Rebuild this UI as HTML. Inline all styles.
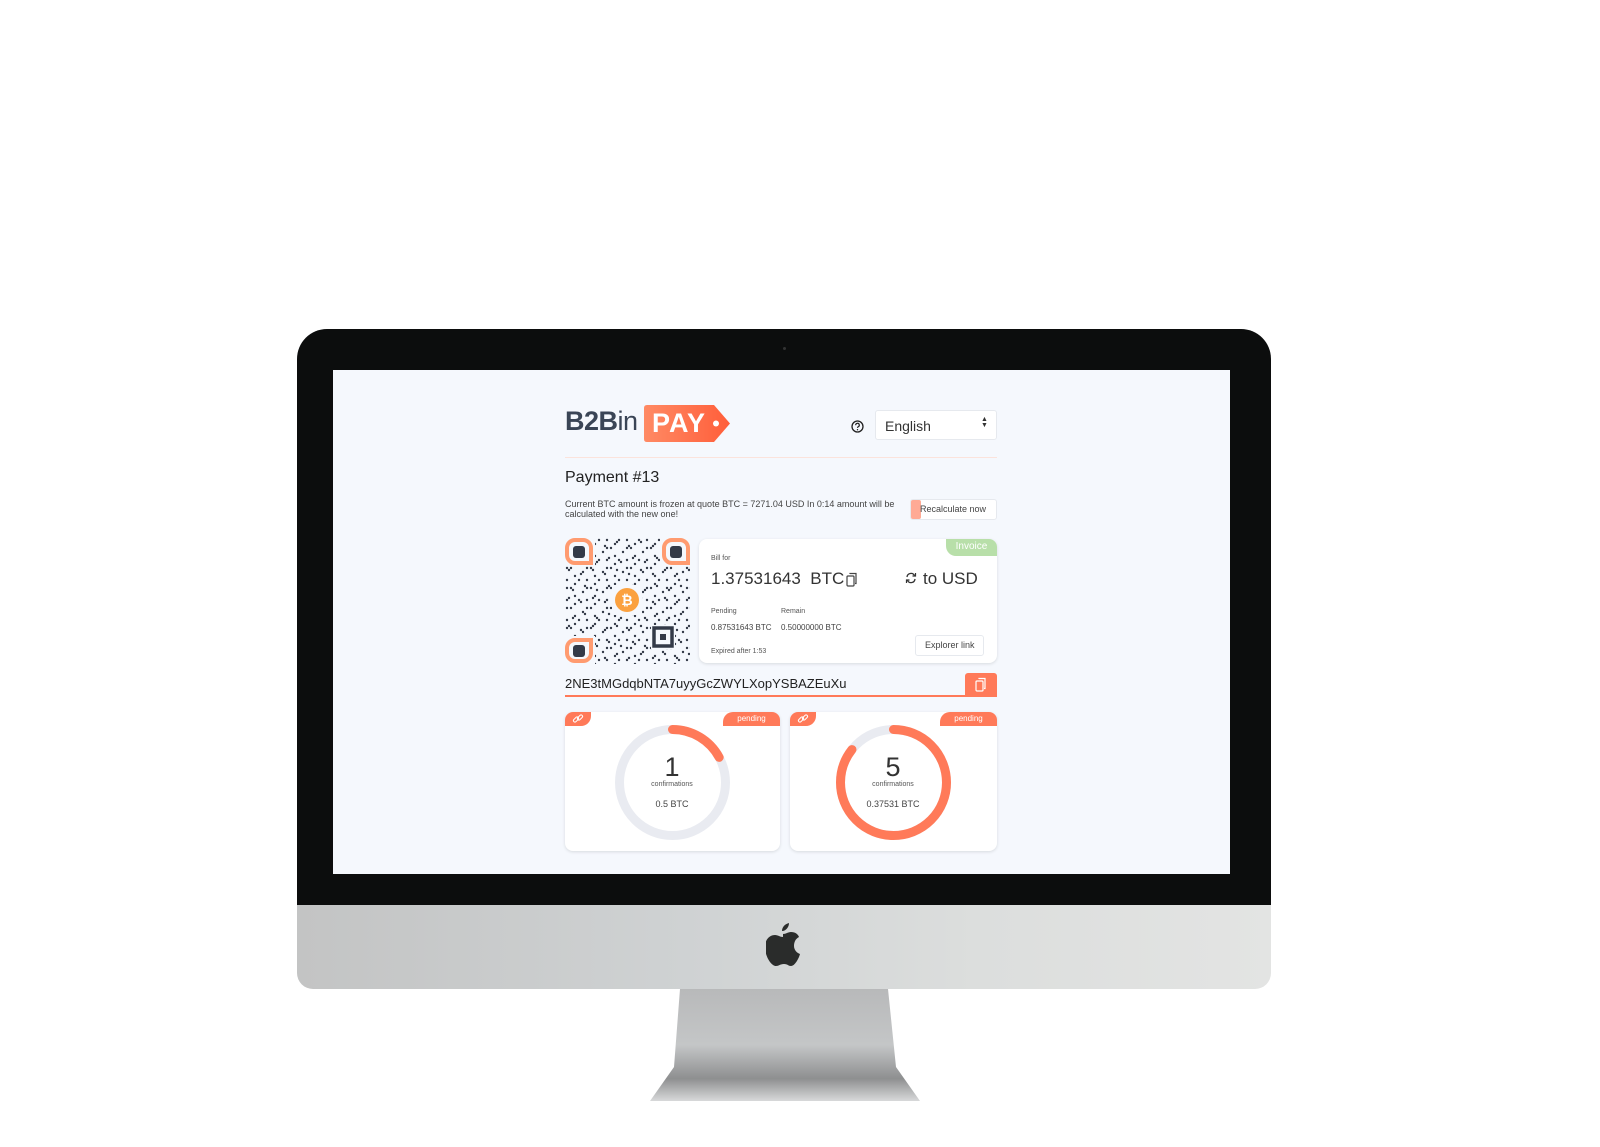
<!DOCTYPE html>
<html><head><meta charset="utf-8">
<style>
*{margin:0;padding:0;box-sizing:border-box}
body{width:1600px;height:1147px;background:#fff;position:relative;overflow:hidden;font-family:"Liberation Sans",sans-serif;color:#2b2f36}
.abs{position:absolute}
.bezel{left:297px;top:329px;width:974px;height:580px;background:#0c0d0d;border-radius:30px 30px 0 0}
.screen{left:333px;top:370px;width:897px;height:504px;background:#f5f8fd}
.chin{left:297px;top:905px;width:974px;height:84px;background:linear-gradient(90deg,#c3c4c4,#cfd2d3 40%,#dcdedd 70%,#e3e4e3);border-radius:0 0 16px 16px}
.stand{left:650px;top:989px;width:270px;height:112px}
.t{position:absolute;white-space:nowrap}
.card{position:absolute;background:#fff;border-radius:8px;box-shadow:0 1px 3px rgba(0,0,0,.12)}
.pend{position:absolute;background:#ff7a59;color:#fff;font-size:8px;text-align:center;line-height:13px}
</style></head><body>
<div class="abs bezel"></div>
<div class="abs" style="left:783px;top:347px;width:3px;height:3px;border-radius:50%;background:#333"></div>
<div class="abs screen"></div>
<div class="abs chin"></div>
<svg class="abs" style="left:766px;top:922px" width="36" height="46" viewBox="0 0 36 46"><path d="M23 1c0 4-3 8-7 8 0-4 3-7 7-8z M17 12c3 0 5-2 8-2 4 0 7 2 8 5-4 2-5 6-5 9 0 4 3 7 6 8-1 4-5 12-9 12-3 0-3-2-7-2s-5 2-8 2c-5 0-11-10-11-19 0-8 5-12 10-12 3 0 5 2 8 2z" fill="#2a2c2b"/></svg>
<svg class="abs stand" viewBox="0 0 270 112"><defs><linearGradient id="sg" x1="0" y1="0" x2="0" y2="1"><stop offset="0" stop-color="#b8b9ba"/><stop offset=".5" stop-color="#c4c6c7"/><stop offset=".8" stop-color="#8e8f90"/><stop offset="1" stop-color="#d8d9da"/></linearGradient></defs><path d="M30 0H238L246 78L270 112H0L24 78Z" fill="url(#sg)"/></svg>

<div class="t" style="left:565px;top:406px;font-size:27px;font-weight:bold;color:#3a4556;letter-spacing:-0.5px">B2B<span style="font-weight:normal">in</span></div>
<svg class="abs" style="left:644px;top:405px" width="86" height="37" viewBox="0 0 86 37"><defs><linearGradient id="lg" x1="0" x2="1"><stop offset="0" stop-color="#ff8a64"/><stop offset="1" stop-color="#ff5e3a"/></linearGradient></defs><path d="M3 0H70L86 18.5L70 37H3Q0 37 0 34V3Q0 0 3 0Z" fill="url(#lg)"/><circle cx="72" cy="18.5" r="3" fill="#fff"/></svg>
<div class="t" style="left:652px;top:408px;font-size:27px;font-weight:bold;color:#fff;letter-spacing:1px">PAY</div>
<svg class="abs" style="left:851px;top:420px" width="13" height="13" viewBox="0 0 13 13"><circle cx="6.5" cy="6.5" r="5.5" fill="none" stroke="#222" stroke-width="1.3"/><path d="M4.7 5.2a1.8 1.8 0 1 1 2.6 1.5c-.6.3-.8.6-.8 1.2" fill="none" stroke="#222" stroke-width="1.2"/><circle cx="6.5" cy="9.7" r=".7" fill="#222"/></svg>
<div class="abs" style="left:875px;top:410px;width:122px;height:30px;background:#fff;border:1px solid #e6e9ee;border-radius:3px"></div>
<div class="t" style="left:885px;top:418px;font-size:14px;color:#333">English</div>
<div class="t" style="left:981px;top:417px;font-size:7px;color:#333;line-height:6px">▲<br>▼</div>
<div class="abs" style="left:565px;top:457px;width:432px;height:1px;background:#fbe3dc"></div>
<div class="t" style="left:565px;top:469px;font-size:16px;color:#222">Payment #13</div>
<div class="t" style="left:565px;top:499px;font-size:9px;color:#444;line-height:10px">Current BTC amount is frozen at quote BTC = 7271.04 USD In 0:14 amount will be<br>calculated with the new one!</div>
<div class="abs" style="left:910px;top:499px;width:87px;height:21px;background:#fff;border:1px solid #e6e9ee;border-radius:3px"></div>
<div class="abs" style="left:911px;top:500px;width:10px;height:19px;background:#ffaa95;border-radius:2px"></div>
<div class="t" style="left:920px;top:504px;font-size:9px;color:#444">Recalculate now</div>

<svg class="abs" style="left:565px;top:538px" width="125" height="126" viewBox="0 0 125 126">
<defs>
<pattern id="p1" width="20" height="20" patternUnits="userSpaceOnUse"><g fill="#333a48"><circle cx="2" cy="2" r="1.2"/><circle cx="14" cy="2" r="1.2"/><circle cx="10" cy="6" r="1.2"/><circle cx="2" cy="10" r="1.2"/><circle cx="6" cy="10" r="1.2"/><circle cx="18" cy="14" r="1.2"/><circle cx="10" cy="18" r="1.2"/></g></pattern>
<pattern id="p2" width="24" height="28" patternUnits="userSpaceOnUse"><g fill="#333a48"><circle cx="4" cy="4" r="1.2"/><circle cx="16" cy="8" r="1.2"/><circle cx="20" cy="20" r="1.2"/><circle cx="8" cy="24" r="1.2"/></g></pattern>
</defs>
<rect x="30" y="0" width="95" height="126" fill="url(#p1)"/><rect x="0" y="28" width="30" height="70" fill="url(#p1)"/>
<rect x="30" y="0" width="95" height="126" fill="url(#p2)"/><rect x="0" y="28" width="30" height="70" fill="url(#p2)"/>
<rect x="0" y="0" width="30" height="28" fill="#f5f8fd"/><rect x="95" y="0" width="30" height="28" fill="#f5f8fd"/><rect x="0" y="98" width="30" height="28" fill="#f5f8fd"/>
<rect x="47" y="47" width="30" height="30" fill="#f5f8fd"/><rect x="86" y="87" width="24" height="24" fill="#f5f8fd"/>
<g fill="none" stroke="#ff9b70" stroke-width="4"><path d="M2 10a8 8 0 0 1 8-8h8a8 8 0 0 1 8 8v15H10a8 8 0 0 1-8-8z"/><path d="M99 10a8 8 0 0 1 8-8h8a8 8 0 0 1 8 8v15H107a8 8 0 0 1-8-8z"/><path d="M2 110a8 8 0 0 1 8-8h16v13a8 8 0 0 1-8 8h-8a8 8 0 0 1-8-8z"/></g>
<rect x="8" y="8" width="12" height="12" rx="3" fill="#333a48"/><rect x="105" y="8" width="12" height="12" rx="3" fill="#333a48"/><rect x="8" y="107" width="12" height="12" rx="3" fill="#333a48"/>
<rect x="89" y="90" width="18" height="18" fill="none" stroke="#333a48" stroke-width="3.5"/><rect x="95" y="96" width="6" height="6" fill="#333a48"/>
<circle cx="62" cy="62" r="12" fill="#fba13f"/><text x="62" y="67" text-anchor="middle" font-size="14" font-weight="bold" fill="#fff" font-family="Liberation Sans">₿</text>
</svg>

<div class="card" style="left:699px;top:539px;width:298px;height:124px;overflow:hidden"><div class="abs" style="right:0;top:0;width:51px;height:17px;background:#b8dfa9;border-radius:0 0 0 10px;color:#fff;font-size:10px;text-align:center;line-height:16px">Invoice</div></div>
<div class="t" style="left:711px;top:555px;font-size:7px;color:#555">Bill for</div>
<div class="t" style="left:711px;top:569px;font-size:17px;color:#333">1.37531643&nbsp; BTC</div>
<svg class="abs" style="left:846px;top:572px" width="12" height="15" viewBox="0 0 12 15"><rect x="1" y="4" width="7" height="10" rx="1" fill="none" stroke="#444" stroke-width="1.2"/><path d="M4 2V1.5h6v10h-1" fill="none" stroke="#444" stroke-width="1.2"/></svg>
<svg class="abs" style="left:905px;top:572px" width="12" height="12" viewBox="0 0 12 12"><path d="M2 5a4 4 0 0 1 7.5-1.5M10 7a4 4 0 0 1-7.5 1.5" fill="none" stroke="#333" stroke-width="1.3"/><path d="M10.5 1v3h-3M1.5 11V8h3" fill="none" stroke="#333" stroke-width="1.2"/></svg>
<div class="t" style="left:923px;top:569px;font-size:17px;color:#333">to USD</div>
<div class="t" style="left:711px;top:608px;font-size:7px;color:#555">Pending</div>
<div class="t" style="left:781px;top:608px;font-size:7px;color:#555">Remain</div>
<div class="t" style="left:711px;top:623px;font-size:8px;color:#444">0.87531643 BTC</div>
<div class="t" style="left:781px;top:623px;font-size:8px;color:#444">0.50000000 BTC</div>
<div class="t" style="left:711px;top:648px;font-size:7px;color:#555">Expired after 1:53</div>
<div class="abs" style="left:915px;top:635px;width:69px;height:21px;border:1px solid #e6e9ee;border-radius:3px;background:#fff"></div>
<div class="t" style="left:925px;top:640px;font-size:9px;color:#444">Explorer link</div>

<div class="t" style="left:565px;top:676px;font-size:13px;color:#222">2NE3tMGdqbNTA7uyyGcZWYLXopYSBAZEuXu</div>
<div class="abs" style="left:565px;top:695px;width:432px;height:2px;background:#ff7a59"></div>
<div class="abs" style="left:965px;top:673px;width:32px;height:23px;background:#ff7a59;border-radius:3px 3px 0 0"></div>
<svg class="abs" style="left:975px;top:677px" width="12" height="15" viewBox="0 0 12 15"><rect x="1" y="4" width="7" height="10" rx="1" fill="none" stroke="#fff" stroke-width="1.2"/><path d="M4 2V1.5h6v10h-1" fill="none" stroke="#fff" stroke-width="1.2"/></svg>

<div class="card" style="left:565px;top:712px;width:215px;height:139px;overflow:hidden">
<div class="pend" style="left:0;top:0;width:26px;height:14px;border-radius:0 0 10px 0"><svg width="12" height="12" viewBox="0 0 12 12" style="margin-top:1px"><g fill="none" stroke="#fff" stroke-width="1"><rect x="1" y="5" width="6" height="3" rx="1.5" transform="rotate(-45 4 6.5)"/><rect x="5" y="3" width="6" height="3" rx="1.5" transform="rotate(-45 8 4.5)"/></g></svg></div>
<div class="pend" style="right:0;top:0;width:57px;height:14px;border-radius:10px 0 0 0">pending</div></div>
<div class="card" style="left:790px;top:712px;width:207px;height:139px;overflow:hidden">
<div class="pend" style="left:0;top:0;width:26px;height:14px;border-radius:0 0 10px 0"><svg width="12" height="12" viewBox="0 0 12 12" style="margin-top:1px"><g fill="none" stroke="#fff" stroke-width="1"><rect x="1" y="5" width="6" height="3" rx="1.5" transform="rotate(-45 4 6.5)"/><rect x="5" y="3" width="6" height="3" rx="1.5" transform="rotate(-45 8 4.5)"/></g></svg></div>
<div class="pend" style="right:0;top:0;width:57px;height:14px;border-radius:10px 0 0 0">pending</div></div>
<svg class="abs" style="left:610px;top:720px" width="125" height="125" viewBox="0 0 125 125"><circle cx="62.5" cy="62.5" r="53" fill="none" stroke="#e9ebf1" stroke-width="9"/><circle cx="62.5" cy="62.5" r="53" fill="none" stroke="#ff7a59" stroke-width="9" stroke-linecap="round" stroke-dasharray="57 400" transform="rotate(-90 62.5 62.5)"/></svg>
<svg class="abs" style="left:831px;top:720px" width="125" height="125" viewBox="0 0 125 125"><circle cx="62.5" cy="62.5" r="53" fill="none" stroke="#e9ebf1" stroke-width="9"/><circle cx="62.5" cy="62.5" r="53" fill="none" stroke="#ff7a59" stroke-width="9" stroke-linecap="round" stroke-dasharray="285 400" transform="rotate(-90 62.5 62.5)"/></svg>
<div class="t" style="left:622px;top:752px;width:100px;text-align:center;font-size:27px;color:#333">1</div>
<div class="t" style="left:622px;top:781px;width:100px;text-align:center;font-size:7px;color:#555">confirmations</div>
<div class="t" style="left:622px;top:799px;width:100px;text-align:center;font-size:9px;color:#444">0.5 BTC</div>
<div class="t" style="left:843px;top:752px;width:100px;text-align:center;font-size:27px;color:#333">5</div>
<div class="t" style="left:843px;top:781px;width:100px;text-align:center;font-size:7px;color:#555">confirmations</div>
<div class="t" style="left:843px;top:799px;width:100px;text-align:center;font-size:9px;color:#444">0.37531 BTC</div>
</body></html>
